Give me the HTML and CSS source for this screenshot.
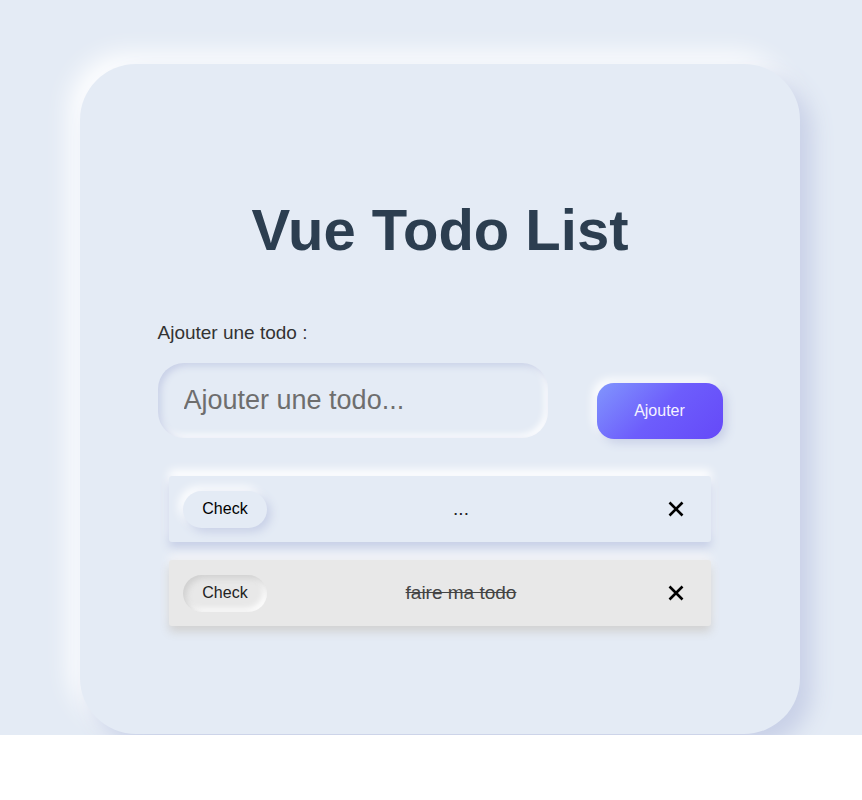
FILE: index.html
```html
<!DOCTYPE html>
<html lang="fr">
<head>
<meta charset="utf-8">
<title>Vue Todo List</title>
<link rel="stylesheet" href="styles.css">
</head>
<body>
<div class="page">
  <div class="card">
    <h1 class="title">Vue Todo List</h1>
    <form class="form">
      <label class="label" for="todo">Ajouter une todo :</label>
      <div class="row">
        <input id="todo" class="input" type="text" placeholder="Ajouter une todo...">
        <button type="button" class="add">Ajouter</button>
      </div>
    </form>
    <ul class="list">
      <li class="item">
        <button type="button" class="check">Check</button>
        <span class="text">...</span>
        <span class="remove"><svg width="16" height="16" viewBox="0 0 16 16"><path d="M1.5 1.5 L14.5 14.5 M14.5 1.5 L1.5 14.5" stroke="#000" stroke-width="2.6" stroke-linecap="butt" fill="none"/></svg></span>
      </li>
      <li class="item done">
        <button type="button" class="check">Check</button>
        <span class="text">faire ma todo</span>
        <span class="remove"><svg width="16" height="16" viewBox="0 0 16 16"><path d="M1.5 1.5 L14.5 14.5 M14.5 1.5 L1.5 14.5" stroke="#000" stroke-width="2.6" stroke-linecap="butt" fill="none"/></svg></span>
      </li>
    </ul>
  </div>
</div>
</body>
</html>
```

FILE: styles.css
```css
html, body {
  margin: 0;
  padding: 0;
  background: #ffffff;
}

body {
  font-family: "Liberation Sans", Arial, Helvetica, sans-serif;
}

.page {
  height: 735px;
  box-sizing: border-box;
  padding-top: 64px;
  background: #e4ebf5;
  overflow: hidden;
}

.card {
  margin-left: 80px;
  width: 720px;
  height: 670px;
  box-sizing: border-box;
  padding-top: 137px;
  border-radius: 56px;
  background: #e4ebf5;
  box-shadow: 12px 12px 22px #c8d0e7, -10px -10px 26px #ffffff;
}

.title {
  margin: 0;
  font-size: 58px;
  line-height: 1;
  font-weight: 700;
  text-align: center;
  color: #2c3e50;
}

.form {
  width: 565px;
  margin: 64px auto 0;
}

.label {
  display: block;
  font-size: 19px;
  line-height: 1;
  color: #333333;
  margin-bottom: 21px;
}

.row {
  display: flex;
  justify-content: space-between;
  align-items: flex-end;
}

.input {
  width: 390px;
  height: 75px;
  box-sizing: border-box;
  border: none;
  outline: none;
  border-radius: 26px;
  padding: 0 26px;
  background: #e4ebf5;
  font-family: inherit;
  font-size: 27px;
  color: #333;
  box-shadow: inset 3px 3px 7px #c8d0e7, inset -3px -3px 7px #ffffff;
}

.input::placeholder {
  color: #6e6e6e;
}

.add {
  width: 126px;
  height: 56px;
  margin-bottom: -1px;
  border: none;
  border-radius: 17px;
  background: linear-gradient(135deg, #8196fd 0%, #6d5dfc 50%, #6549f8 100%);
  color: #f4f2ff;
  font-family: inherit;
  font-size: 16px;
  box-shadow: 4px 4px 10px #c8d0e7, -4px -4px 10px #ffffff;
}

.list {
  list-style: none;
  width: 542px;
  margin: 38px auto 0;
  padding: 0;
  display: flex;
  flex-direction: column;
  gap: 18px;
}

.item {
  height: 66px;
  box-sizing: border-box;
  padding: 0 14px;
  display: flex;
  align-items: center;
  border-radius: 3px;
  background: #e4ebf5;
  box-shadow: 0 6px 10px #c8d0e7, 0 -6px 10px #ffffff;
}

.check {
  width: 84px;
  height: 37px;
  border: none;
  border-radius: 19px;
  background: #e4ebf5;
  color: #000;
  font-family: inherit;
  font-size: 16px;
  box-shadow: 4px 4px 10px #c8d0e7, -4px -4px 10px #ffffff;
}

.text {
  flex: 1;
  text-align: center;
  font-size: 19px;
  color: #222;
}

.remove {
  width: 42px;
  display: flex;
  justify-content: center;
  align-items: center;
}

.item.done {
  background: #e8e8e8;
  box-shadow: 0 6px 10px #d2d2d2, 0 -6px 10px #f2f3f7;
}

.item.done .check {
  background: #e8e8e8;
  color: #222;
  box-shadow: inset 3px 3px 6px #cfcfcf, inset -3px -3px 6px #ffffff;
}

.item.done .text {
  text-decoration: line-through;
  color: #444;
}
```
